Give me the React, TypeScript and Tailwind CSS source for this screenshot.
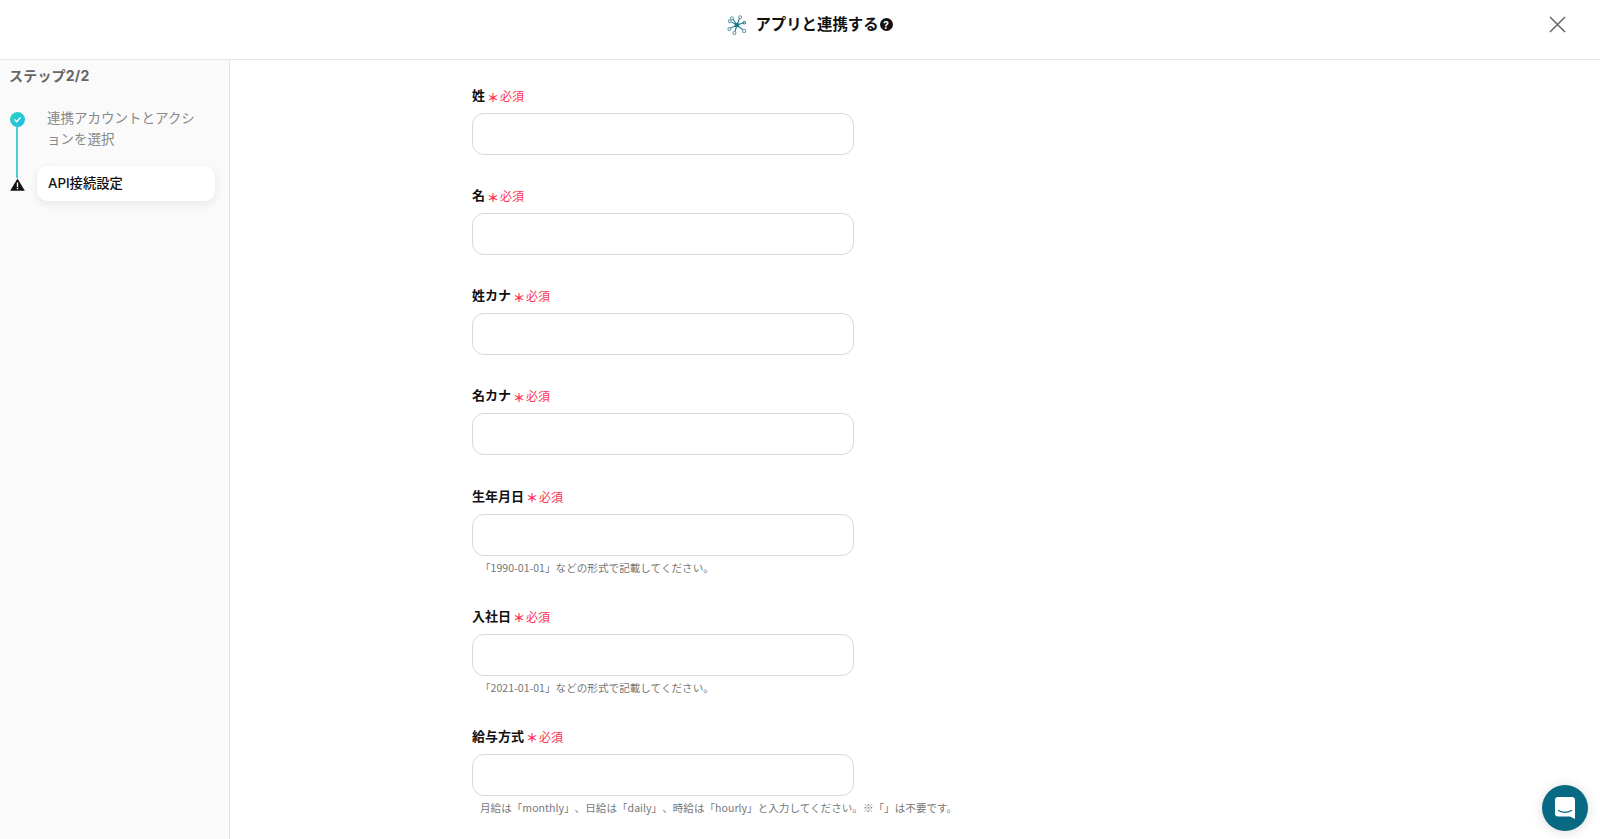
const font = "font-['Inter','Noto_Sans_CJK_JP',sans-serif]";

const fields = [
  { label: "姓" },
  { label: "名" },
  { label: "姓カナ" },
  { label: "名カナ" },
  { label: "生年月日", hint: "「1990-01-01」などの形式で記載してください。" },
  { label: "入社日", hint: "「2021-01-01」などの形式で記載してください。" },
  { label: "給与方式", hint: "月給は「monthly」、日給は「daily」、時給は「hourly」と入力してください。※「」は不要です。" },
];

const AppLinkIcon = () => (
  <svg width="20" height="20" viewBox="0 0 22 22" fill="none" stroke="#1f7a8c" strokeWidth="1.200">
    <path d="M11 11 6 3.8M11 11l3-8M11 11l7.5-2.5M11 11l7 6M11 11l-2.5 8M11 11 3 15M11 11 3.500 7" />
    <circle cx="11" cy="11" r="2" fill="#1f7a8c" />
    <circle cx="5.500" cy="3.500" r="1.600" fill="#fff" stroke="#6b9fb0" />
    <circle cx="14.500" cy="2.500" r="1.600" fill="#fff" stroke="#6b9fb0" />
    <circle cx="19" cy="8.500" r="1.400" fill="#fff" />
    <circle cx="18.800" cy="17.500" r="1.800" fill="#fff" stroke="#6b9fb0" />
    <circle cx="8.200" cy="19.800" r="1.600" fill="#fff" stroke="#6b9fb0" />
    <circle cx="2.600" cy="15.500" r="1.600" fill="#fff" stroke="#6b9fb0" />
    <circle cx="3" cy="7" r="1.600" fill="#fff" stroke="#6b9fb0" />
  </svg>
);

const Header = () => (
  <header className="relative flex h-[60px] shrink-0 items-center justify-center border-b border-[#e8e8e8] bg-white pb-[10px] pl-[20px]">
    <div className="flex items-center">
      <AppLinkIcon />
      <span className="ml-[8px] text-[15.4px] font-bold leading-6 text-[#111]">アプリと連携する</span>
      <span className="ml-[1px] flex h-[13px] w-[13px] items-center justify-center rounded-full bg-[#111] text-[10px] font-bold leading-none text-white">?</span>
    </div>
    <button className="absolute right-[33px] top-[15px] text-[#666]">
      <svg width="19" height="19" viewBox="0 0 19 19" stroke="currentColor" strokeWidth="1.500" fill="none">
        <path d="M2 2l15 15M17 2 2 17" />
      </svg>
    </button>
  </header>
);

const Sidebar = () => (
  <aside className="w-[230px] shrink-0 border-r border-[#e3e3e3] bg-[#fafafa] pl-[9px] pt-[6px]">
    <div className="text-[14px] font-bold leading-5 tracking-[0.2px] text-[#666]">ステップ2/2</div>
    <div className="mt-[21px] flex">
      <div className="flex w-[16px] flex-col items-center pt-[5px]">
        <span className="flex h-[15px] w-[15px] shrink-0 items-center justify-center rounded-full bg-gradient-to-br from-[#2dd4bf] to-[#22b8e8]">
          <svg width="9" height="9" viewBox="0 0 9 9" fill="none" stroke="#fff" strokeWidth="1.400">
            <path d="M1.500 4.500 3.700 6.700 7.500 2.500" />
          </svg>
        </span>
        <span className="h-[51px] w-[2px] bg-[#4ccbd0]" />
        <svg width="15" height="13" viewBox="0 0 15 13" className="shrink-0">
          <path d="M7.500.5 14.800 12.800H.2z" fill="#111" />
          <rect x="6.800" y="4.500" width="1.400" height="4.500" fill="#fff" />
          <rect x="6.800" y="9.800" width="1.400" height="1.500" fill="#fff" />
        </svg>
      </div>
      <div className="ml-[12px] flex w-[178px] flex-col">
        <div className="mt-px w-[152px] box-content pl-[10px] text-[13.5px] leading-[21px] text-[#888]">連携アカウントとアクションを選択</div>
        <div className="mt-[16px] flex h-[35px] w-[178px] items-center rounded-[10px] bg-white pb-[1px] pl-[11px] pt-[1px] text-[13.3px] font-medium text-[#111] shadow-[0_3px_10px_rgba(0,0,0,0.08)]">
          API接続設定
        </div>
      </div>
    </div>
  </aside>
);

const Field = ({ label, hint }: { label: string; hint?: string }) => (
  <div className="mb-[29.13px]">
    <div className="flex h-6 items-center">
      <span className="mb-[2px] text-[13px] font-bold leading-6 text-[#111]">{label}</span>
      <span className="ml-[2px] mt-[3px] font-['Noto_Sans_CJK_JP',sans-serif] text-[12px] font-bold leading-none text-[#ff3355]">＊</span>
      <span className="ml-px mt-[2px] text-[12px] leading-6 text-[#ff3355]">必須</span>
    </div>
    <input className="mt-[5px] block h-[42px] w-[382px] rounded-[12px] border border-[#d5d9e0] bg-white" />
    {hint && (
      <div className="h-5 whitespace-nowrap pl-2 font-['Noto_Sans_CJK_JP',sans-serif] text-[10.6px] leading-[24px] text-[#777] [text-spacing-trim:space-all]">{hint}</div>
    )}
  </div>
);

export default function App() {
  return (
    <div className={`flex h-screen flex-col overflow-hidden bg-white ${font}`}>
      <Header />
      <div className="flex min-h-0 flex-1">
        <Sidebar />
        <main className="flex-1 overflow-hidden pl-[242px] pt-[24px]">
          {fields.map((f) => (
            <Field key={f.label} {...f} />
          ))}
        </main>
      </div>
      <button className="absolute bottom-[8px] right-[12px] flex h-[46px] w-[46px] items-center justify-center rounded-full bg-[#076a82] shadow-[0_1px_12px_rgba(0,0,0,0.15)]">
        <svg width="20" height="22" viewBox="0 0 20 22">
          <path d="M3 0h14a3 3 0 0 1 3 3v19l-5-2.500H3a3 3 0 0 1-3-3V3a3 3 0 0 1 3-3z" fill="#fff" />
          <path d="M3.500 13.500c4 2.200 9 2.200 13 0" stroke="#076a82" strokeWidth="1.300" fill="none" strokeLinecap="round" />
        </svg>
      </button>
    </div>
  );
}
